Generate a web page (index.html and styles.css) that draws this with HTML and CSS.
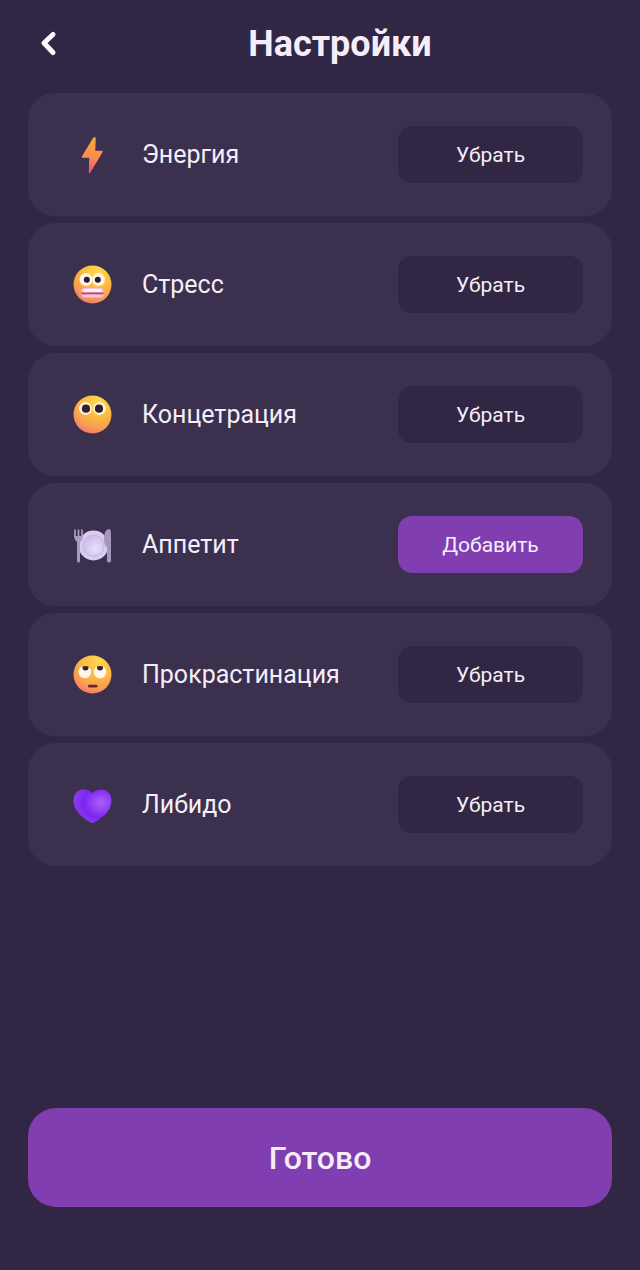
FILE: index.html
```html
<!DOCTYPE html>
<html lang="ru">
<head>
<meta charset="utf-8">
<meta name="viewport" content="width=device-width, initial-scale=1">
<title>Настройки</title>
<link rel="stylesheet" href="styles.css">
</head>
<body>
<svg class="defs" width="0" height="0" aria-hidden="true">
  <defs>
    <linearGradient id="bolt" x1="0.5" y1="0" x2="0.45" y2="1">
      <stop offset="0" stop-color="#f6a63e"/><stop offset="0.55" stop-color="#fb8d4c"/><stop offset="1" stop-color="#ee4f80"/>
    </linearGradient>
    <radialGradient id="face" cx="0.66" cy="0.15" r="0.95">
      <stop offset="0" stop-color="#ffd84a"/><stop offset="0.45" stop-color="#fbba42"/><stop offset="0.75" stop-color="#f89d52"/><stop offset="1" stop-color="#ec7077"/>
    </radialGradient>
    <radialGradient id="plate" cx="0.6" cy="0.65" r="0.65">
      <stop offset="0" stop-color="#e8e0fa"/><stop offset="1" stop-color="#cdbdea"/>
    </radialGradient>
    <radialGradient id="heart" cx="0.72" cy="0.4" r="0.8">
      <stop offset="0" stop-color="#aa62f8"/><stop offset="0.3" stop-color="#9440f6"/><stop offset="0.55" stop-color="#7d25f0"/><stop offset="1" stop-color="#8b45ea"/>
    </radialGradient>
  </defs>
</svg>
<main class="screen">
  <header class="header">
    <button class="back" type="button" aria-label="Назад">
      <svg class="back-icon" viewBox="0 0 24 28" aria-hidden="true"><path d="M17 4.500 8 13l9 9.500"/></svg>
    </button>
    <h1 class="title">Настройки</h1>
  </header>

  <ul class="list">
    <li class="card">
      <svg class="icon" viewBox="0 0 40 40" aria-hidden="true">
        <path fill="url(#bolt)" stroke="url(#bolt)" stroke-width="1.500" stroke-linejoin="round" d="M22 3 10.500 22h7.500L17.500 37.500 30 16.500h-7.500L23 3z"/>
      </svg>
      <span class="label" id="energy">Энергия</span>
      <button class="toggle" type="button" aria-describedby="energy">Убрать</button>
    </li>
    <li class="card">
      <svg class="icon" viewBox="0 0 40 40" aria-hidden="true">
        <circle cx="20.500" cy="19.500" r="19" fill="url(#face)"/>
        <circle cx="14" cy="14.500" r="6.500" fill="#fff6e6"/><circle cx="26.500" cy="14.500" r="6.500" fill="#fff6e6"/>
        <circle cx="14.800" cy="14.800" r="3" fill="#2c1b30"/><circle cx="25.800" cy="14.800" r="3" fill="#2c1b30"/>
        <rect x="9.500" y="23" width="22" height="9.500" rx="3" fill="#f5c3dc"/>
        <rect x="11.500" y="24" width="18" height="3" rx="1.500" fill="#fff0fa"/>
        <path d="M9.500 28q2 .8 4 .4h14q2 .4 4-.4" fill="none" stroke="#c9415d" stroke-width="1.800"/>
      </svg>
      <span class="label" id="stress">Стресс</span>
      <button class="toggle" type="button" aria-describedby="stress">Убрать</button>
    </li>
    <li class="card">
      <svg class="icon" viewBox="0 0 40 40" aria-hidden="true">
        <circle cx="20.500" cy="19.500" r="19" fill="url(#face)"/>
        <circle cx="13.500" cy="13.500" r="6.500" fill="#fff0d9"/><circle cx="27.500" cy="13.500" r="6.500" fill="#fff0d9"/>
        <circle cx="14" cy="13.700" r="4.100" fill="#33202e"/><circle cx="27" cy="13.700" r="4.100" fill="#33202e"/>
      </svg>
      <span class="label" id="focus">Концетрация</span>
      <button class="toggle" type="button" aria-describedby="focus">Убрать</button>
    </li>
    <li class="card">
      <svg class="icon" viewBox="0 0 40 40" aria-hidden="true">
        <circle cx="21.500" cy="20.500" r="15" fill="#d8cdf0"/>
        <circle cx="21.500" cy="20.500" r="10.500" fill="url(#plate)" stroke="#bfb0df" stroke-width="0.800"/>
        <path d="M3 5v7M6.500 5v10M10 5v7" stroke="#a99bbb" stroke-width="1.700" stroke-linecap="round"/>
        <path d="M2.200 11h8.600q0 5-4.300 6.500-4.300-1.500-4.300-6.500z" fill="#a99bbb"/>
        <path d="M6.500 16v20" stroke="#aa9cbc" stroke-width="3" stroke-linecap="round"/>
        <path d="M39 8q0-4-2.500-4-4.500 1-4.500 10 0 6 3 8v14q0 1.500 2 1.500t2-1.500z" fill="#a497b7"/>
      </svg>
      <span class="label" id="appetite">Аппетит</span>
      <button class="toggle toggle-add" type="button" aria-describedby="appetite">Добавить</button>
    </li>
    <li class="card">
      <svg class="icon" viewBox="0 0 40 40" aria-hidden="true">
        <circle cx="20.500" cy="19.500" r="19" fill="url(#face)"/>
        <circle cx="12.800" cy="17" r="6.300" fill="#fff5e8"/><circle cx="28" cy="17" r="6.300" fill="#fff5e8"/>
        <path d="M10.500 11.500q3-1 6 0v1a3 3 0 0 1-6 0zM25 11.500q3-1 6 0v1a3 3 0 0 1-6 0z" fill="#3a2028"/>
        <rect x="16" y="29.800" width="9.500" height="2.800" rx="1.300" fill="#6b2a30"/>
      </svg>
      <span class="label" id="procrastination">Прокрастинация</span>
      <button class="toggle" type="button" aria-describedby="procrastination">Убрать</button>
    </li>
    <li class="card">
      <svg class="icon" viewBox="0 0 40 40" aria-hidden="true">
        <path fill="url(#heart)" d="M20.500 8C18 5.500 15 4.500 12 4.500 5.500 4.500 1.500 9 1.500 15.500c0 9.500 8 16.500 16 21.500q3 2 6 0c8-5 16-12 16-21.500C39.500 9 35.500 4.500 29 4.500c-3 0-6 1-8.500 3.500z"/>
      </svg>
      <span class="label" id="libido">Либидо</span>
      <button class="toggle" type="button" aria-describedby="libido">Убрать</button>
    </li>
  </ul>

  <button class="done" type="button">Готово</button>
</main>
</body>
</html>
```
FILE: styles.css
```css
* {
  box-sizing: border-box;
}

body {
  margin: 0;
  background: #312644;
  color: #f5eef9;
  font-family: Roboto, "Liberation Sans", sans-serif;
}

button {
  border: 0;
  padding: 0;
  color: inherit;
  font-family: inherit;
  cursor: pointer;
}

.defs {
  position: absolute;
}

.screen {
  display: flex;
  flex-direction: column;
  min-height: 100vh;
  padding: 20px 28px 63px;
}

.header {
  display: flex;
  align-items: center;
  margin-bottom: 25px;
}

.back {
  display: grid;
  place-items: center;
  width: 40px;
  height: 48px;
  background: none;
}

.back-icon {
  width: 24px;
  height: 28px;
  fill: none;
  stroke: #fff;
  stroke-width: 5;
  stroke-linecap: round;
  stroke-linejoin: round;
}

.title {
  flex: 1;
  margin: 0;
  font-size: 36px;
  line-height: 48px;
  font-weight: 700;
  text-align: center;
}

.list {
  display: flex;
  flex-direction: column;
  gap: 7px;
  margin: 0;
  padding: 0;
  list-style: none;
}

.card {
  display: flex;
  align-items: center;
  padding: 33px 29px 33px 44px;
  border-radius: 27px;
  background: #3b304d;
}

.icon {
  flex: none;
  width: 40px;
  height: 40px;
}

.label {
  flex: 1;
  margin-left: 30px;
  font-size: 25px;
  line-height: 32px;
}

.toggle {
  width: 185px;
  height: 57px;
  border-radius: 14px;
  background: #312644;
  font-size: 21px;
}

.toggle-add,
.done {
  background: #813eb0;
}

.done {
  height: 99px;
  margin-top: auto;
  border-radius: 28px;
  font-size: 32px;
  font-weight: 500;
}
```
